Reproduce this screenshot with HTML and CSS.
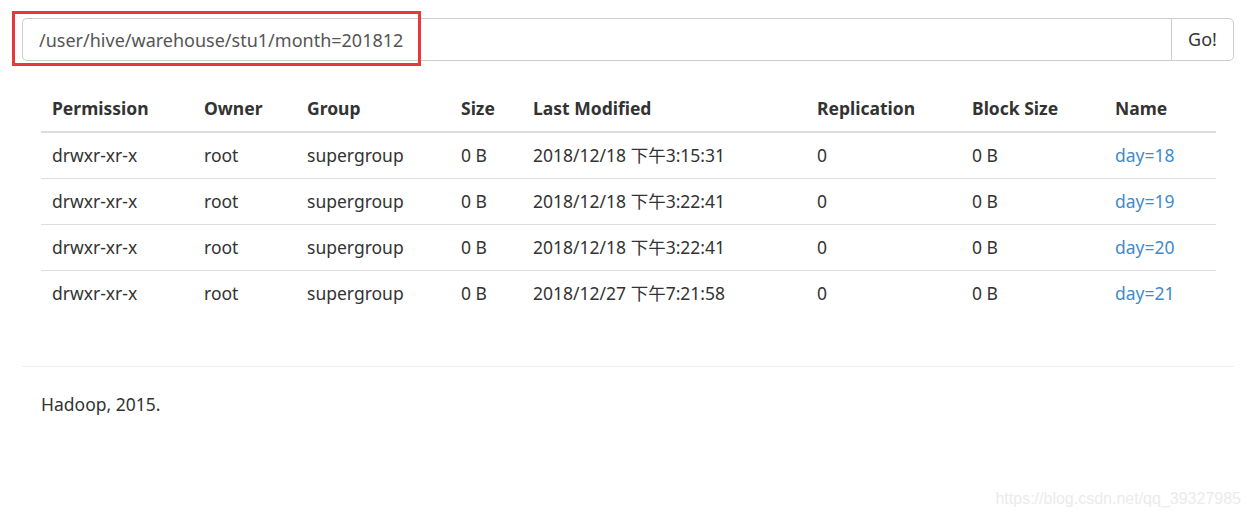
FILE: index.html
```html
<!DOCTYPE html>
<html>
<head>
<meta charset="utf-8">
<link rel="stylesheet" href="styles.css">
</head>
<body>
<div class="page">
  <div class="nav-row">
    <div class="input-group">
      <input class="form-control" type="text" value="/user/hive/warehouse/stu1/month=201812">
      <button class="btn" type="button">Go!</button>
    </div>
    <div class="highlight"></div>
  </div>
  <table class="listing">
    <thead>
      <tr>
        <th class="c-perm">Permission</th>
        <th class="c-owner">Owner</th>
        <th class="c-group">Group</th>
        <th class="c-size">Size</th>
        <th class="c-mod">Last Modified</th>
        <th class="c-rep">Replication</th>
        <th class="c-bs">Block Size</th>
        <th class="c-name">Name</th>
      </tr>
    </thead>
    <tbody>
      <tr><td>drwxr-xr-x</td><td>root</td><td>supergroup</td><td>0 B</td><td>2018/12/18 下午3:15:31</td><td>0</td><td>0 B</td><td><a href="#">day=18</a></td></tr>
      <tr><td>drwxr-xr-x</td><td>root</td><td>supergroup</td><td>0 B</td><td>2018/12/18 下午3:22:41</td><td>0</td><td>0 B</td><td><a href="#">day=19</a></td></tr>
      <tr><td>drwxr-xr-x</td><td>root</td><td>supergroup</td><td>0 B</td><td>2018/12/18 下午3:22:41</td><td>0</td><td>0 B</td><td><a href="#">day=20</a></td></tr>
      <tr><td>drwxr-xr-x</td><td>root</td><td>supergroup</td><td>0 B</td><td>2018/12/27 下午7:21:58</td><td>0</td><td>0 B</td><td><a href="#">day=21</a></td></tr>
    </tbody>
  </table>
  <hr class="sep">
  <footer class="footer">Hadoop, 2015.</footer>
  <div class="watermark">https://blog.csdn.net/qq_39327985</div>
</div>
</body>
</html>
```
FILE: styles.css
```css
html, body {
  margin: 0;
  padding: 0;
  background: #fff;
}
body {
  font-family: "Noto Sans", "Noto Sans CJK SC", sans-serif;
  font-size: 17.5px;
  line-height: 25px;
  color: #333;
  width: 1251px;
  height: 517px;
  overflow: hidden;
}
.page {
  position: relative;
  padding: 18px 17px 0 22px;
  height: 517px;
  box-sizing: border-box;
}
.nav-row {
  position: relative;
}
.input-group {
  display: flex;
  height: 43px;
}
.form-control {
  flex: 1;
  height: 43px;
  box-sizing: border-box;
  border: 1px solid #ccc;
  border-right: none;
  border-radius: 5px 0 0 5px;
  padding: 0 15px 0 16px;
  font: inherit;
  font-size: 18px;
  color: #555;
  outline: none;
  margin: 0;
}
.btn {
  width: 63px;
  height: 43px;
  box-sizing: border-box;
  border: 1px solid #ccc;
  border-radius: 0 5px 5px 0;
  background: #fff;
  font: inherit;
  font-size: 18px;
  color: #333;
  padding: 0;
  margin: 0;
}
.highlight {
  position: absolute;
  left: -10px;
  top: -7px;
  width: 403px;
  height: 49px;
  border: 3px solid #e8383b;
  pointer-events: none;
}
.listing {
  border-collapse: collapse;
  margin: 25px 0 0 19px;
  width: 1175px;
}
.listing th, .listing td {
  text-align: left;
  padding: 10px 10px 10px 11px;
  line-height: 25px;
  white-space: nowrap;
}
.listing th {
  font-weight: 700;
  border-bottom: 2px solid #ddd;
}
.listing td {
  border-top: 1px solid #ddd;
}
.listing tbody tr:first-child td {
  border-top: none;
}
.c-perm { width: 131px; }
.c-owner { width: 82px; }
.c-group { width: 133px; }
.c-size { width: 51px; }
.c-mod { width: 263px; }
.c-rep { width: 134px; }
.c-bs { width: 122px; }
.listing a {
  color: #428bca;
  text-decoration: none;
}
.sep {
  border: none;
  border-top: 1px solid #eee;
  margin: 50px 0 0 0;
  width: 1212px;
}
.footer {
  margin: 25px 0 0 19px;
  line-height: 25px;
}
.watermark {
  position: absolute;
  right: 10px;
  top: 486px;
  font-family: "Liberation Sans", sans-serif;
  font-size: 16px;
  color: #ebebeb;
}
```
